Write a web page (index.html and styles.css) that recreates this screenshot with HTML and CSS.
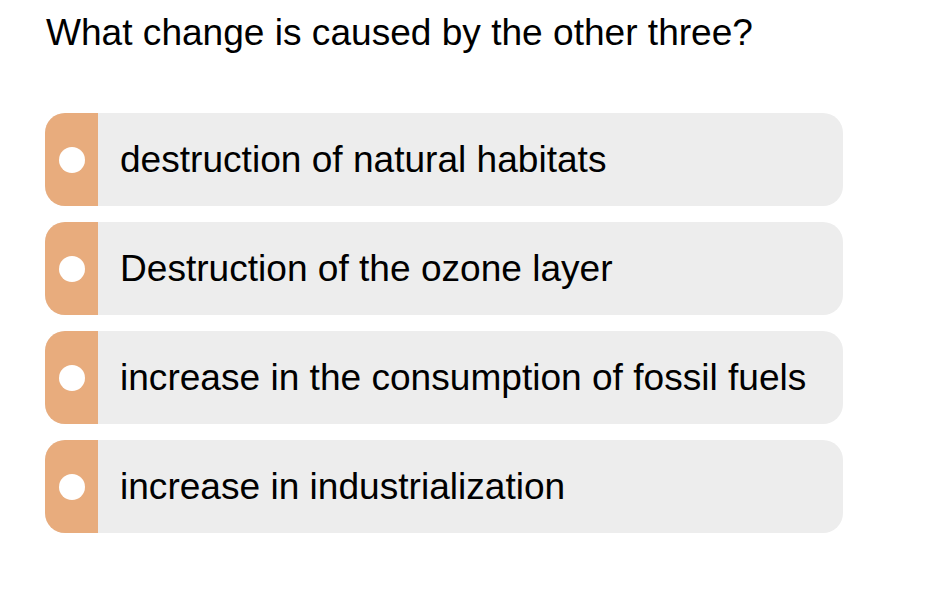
FILE: index.html
```html
<!DOCTYPE html>
<html>
<head>
<meta charset="utf-8">
<link rel="stylesheet" href="styles.css">
</head>
<body>
<div class="quiz">
  <h1 class="question">What change is caused by the other three?</h1>
  <div class="options">
    <div class="option"><div class="marker"><span class="dot"></span></div><div class="label">destruction of natural habitats</div></div>
    <div class="option"><div class="marker"><span class="dot"></span></div><div class="label">Destruction of the ozone layer</div></div>
    <div class="option"><div class="marker"><span class="dot"></span></div><div class="label">increase in the consumption of fossil fuels</div></div>
    <div class="option"><div class="marker"><span class="dot"></span></div><div class="label">increase in industrialization</div></div>
  </div>
</div>
</body>
</html>
```
FILE: styles.css
```css
html, body {
  margin: 0;
  padding: 0;
  background: #ffffff;
}
body {
  font-family: "Liberation Sans", Arial, sans-serif;
  color: #000;
}
.quiz {
  padding: 10px 0 0 45px;
  width: 798px;
}
.question {
  margin: 0 0 0 1px;
  font-size: 37.1px;
  font-weight: normal;
  line-height: 44px;
}
.options {
  margin-top: 59px;
  display: flex;
  flex-direction: column;
  gap: 16px;
}
.option {
  display: flex;
  align-items: center;
  height: 93px;
  background: #ededed;
  border-radius: 20px;
  overflow: hidden;
}
.marker {
  width: 53px;
  align-self: stretch;
  background: #e8ac7d;
  display: flex;
  align-items: center;
  justify-content: center;
}
.dot {
  width: 26px;
  height: 26px;
  border-radius: 50%;
  background: #fff;
}
.label {
  padding-left: 22px;
  font-size: 37.1px;
}
```
